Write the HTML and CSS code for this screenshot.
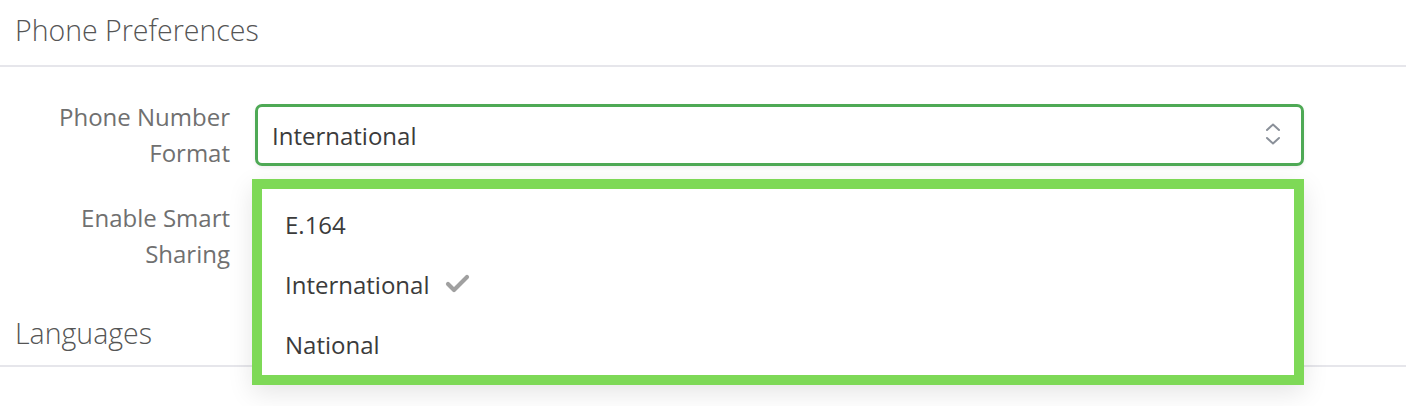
FILE: index.html
```html
<!DOCTYPE html>
<html>
<head>
<meta charset="utf-8">
<link rel="stylesheet" href="styles.css">
</head>
<body>
<div class="page">
  <div class="section-header section-phone"><span class="section-title">Phone Preferences</span></div>
  <div class="form">
    <div class="row row-format">
      <div class="label">Phone Number<br>Format</div>
      <div class="select">
        <span class="select-value">International</span>
        <svg class="chevrons" width="16" height="24" viewBox="0 0 16 24">
          <polyline points="2,7 8,1.5 14,7" fill="none" stroke="#8a9099" stroke-width="2" stroke-linecap="round" stroke-linejoin="round"/>
          <polyline points="2,15 8,20.5 14,15" fill="none" stroke="#8a9099" stroke-width="2" stroke-linecap="round" stroke-linejoin="round"/>
        </svg>
      </div>
    </div>
    <div class="row row-sharing">
      <div class="label">Enable Smart<br>Sharing</div>
      <div class="field"></div>
    </div>
  </div>
  <div class="section-header section-languages"><span class="section-title">Languages</span></div>

  <div class="menu">
    <div class="menu-item">E.164</div>
    <div class="menu-item">International
      <svg class="check" width="26" height="20" viewBox="0 0 26 20">
        <polyline points="3,10 9,16 22,3" fill="none" stroke="#a0a0a0" stroke-width="4.2" stroke-linecap="round" stroke-linejoin="round"/>
      </svg>
    </div>
    <div class="menu-item">National</div>
  </div>
</div>
</body>
</html>
```

FILE: styles.css
```css
html, body {
  margin: 0;
  padding: 0;
  background: #ffffff;
}

body {
  font-family: "Open Sans", "Lato", sans-serif;
  color: #444;
}

.page {
  position: relative;
  width: 1406px;
  height: 406px;
  overflow: hidden;
}

.section-header {
  box-sizing: border-box;
  height: 67px;
  padding: 0 15px;
  display: flex;
  align-items: center;
  border-bottom: 2px solid #e6e6eb;
}

.section-phone {
  padding-bottom: 5px;
}

.section-title {
  font-size: 28.5px;
  line-height: 30px;
  color: #555555;
  font-weight: 300;
}

.form {
  padding-top: 32px;
  padding-right: 102px;
}

.row {
  display: flex;
  align-items: center;
  gap: 25px;
}

.label {
  width: 230px;
  flex: 0 0 230px;
  text-align: right;
  font-size: 24px;
  line-height: 36px;
  color: #707070;
}

.row-sharing {
  margin-top: 29px;
}

.select {
  flex: 1;
  height: 62px;
  box-sizing: border-box;
  border: 3.5px solid #4ea955;
  border-radius: 7px;
  display: flex;
  align-items: center;
  justify-content: space-between;
  padding: 0 20px 0 14px;
  box-shadow: 0 2px 4px rgba(0,0,0,0.06);
}

.select-value {
  font-size: 24px;
  color: #3b3b3b;
}

.chevrons {
  display: block;
}

.field {
  flex: 1;
  height: 72px;
}

.section-languages {
  height: 95px;
  align-items: flex-end;
  padding-bottom: 17px;
}

.menu {
  position: absolute;
  left: 252px;
  top: 179px;
  width: 1052px;
  height: 206px;
  box-sizing: border-box;
  border: 10px solid #7ed957;
  background: #fff;
  padding-top: 5px;
  box-shadow: 0 8px 24px rgba(0,0,0,0.10);
}

.menu-item {
  height: 60px;
  display: flex;
  align-items: center;
  padding-left: 23px;
  font-size: 24px;
  color: #3b3b3b;
}

.check {
  margin-left: 16px;
  display: block;
}
```
